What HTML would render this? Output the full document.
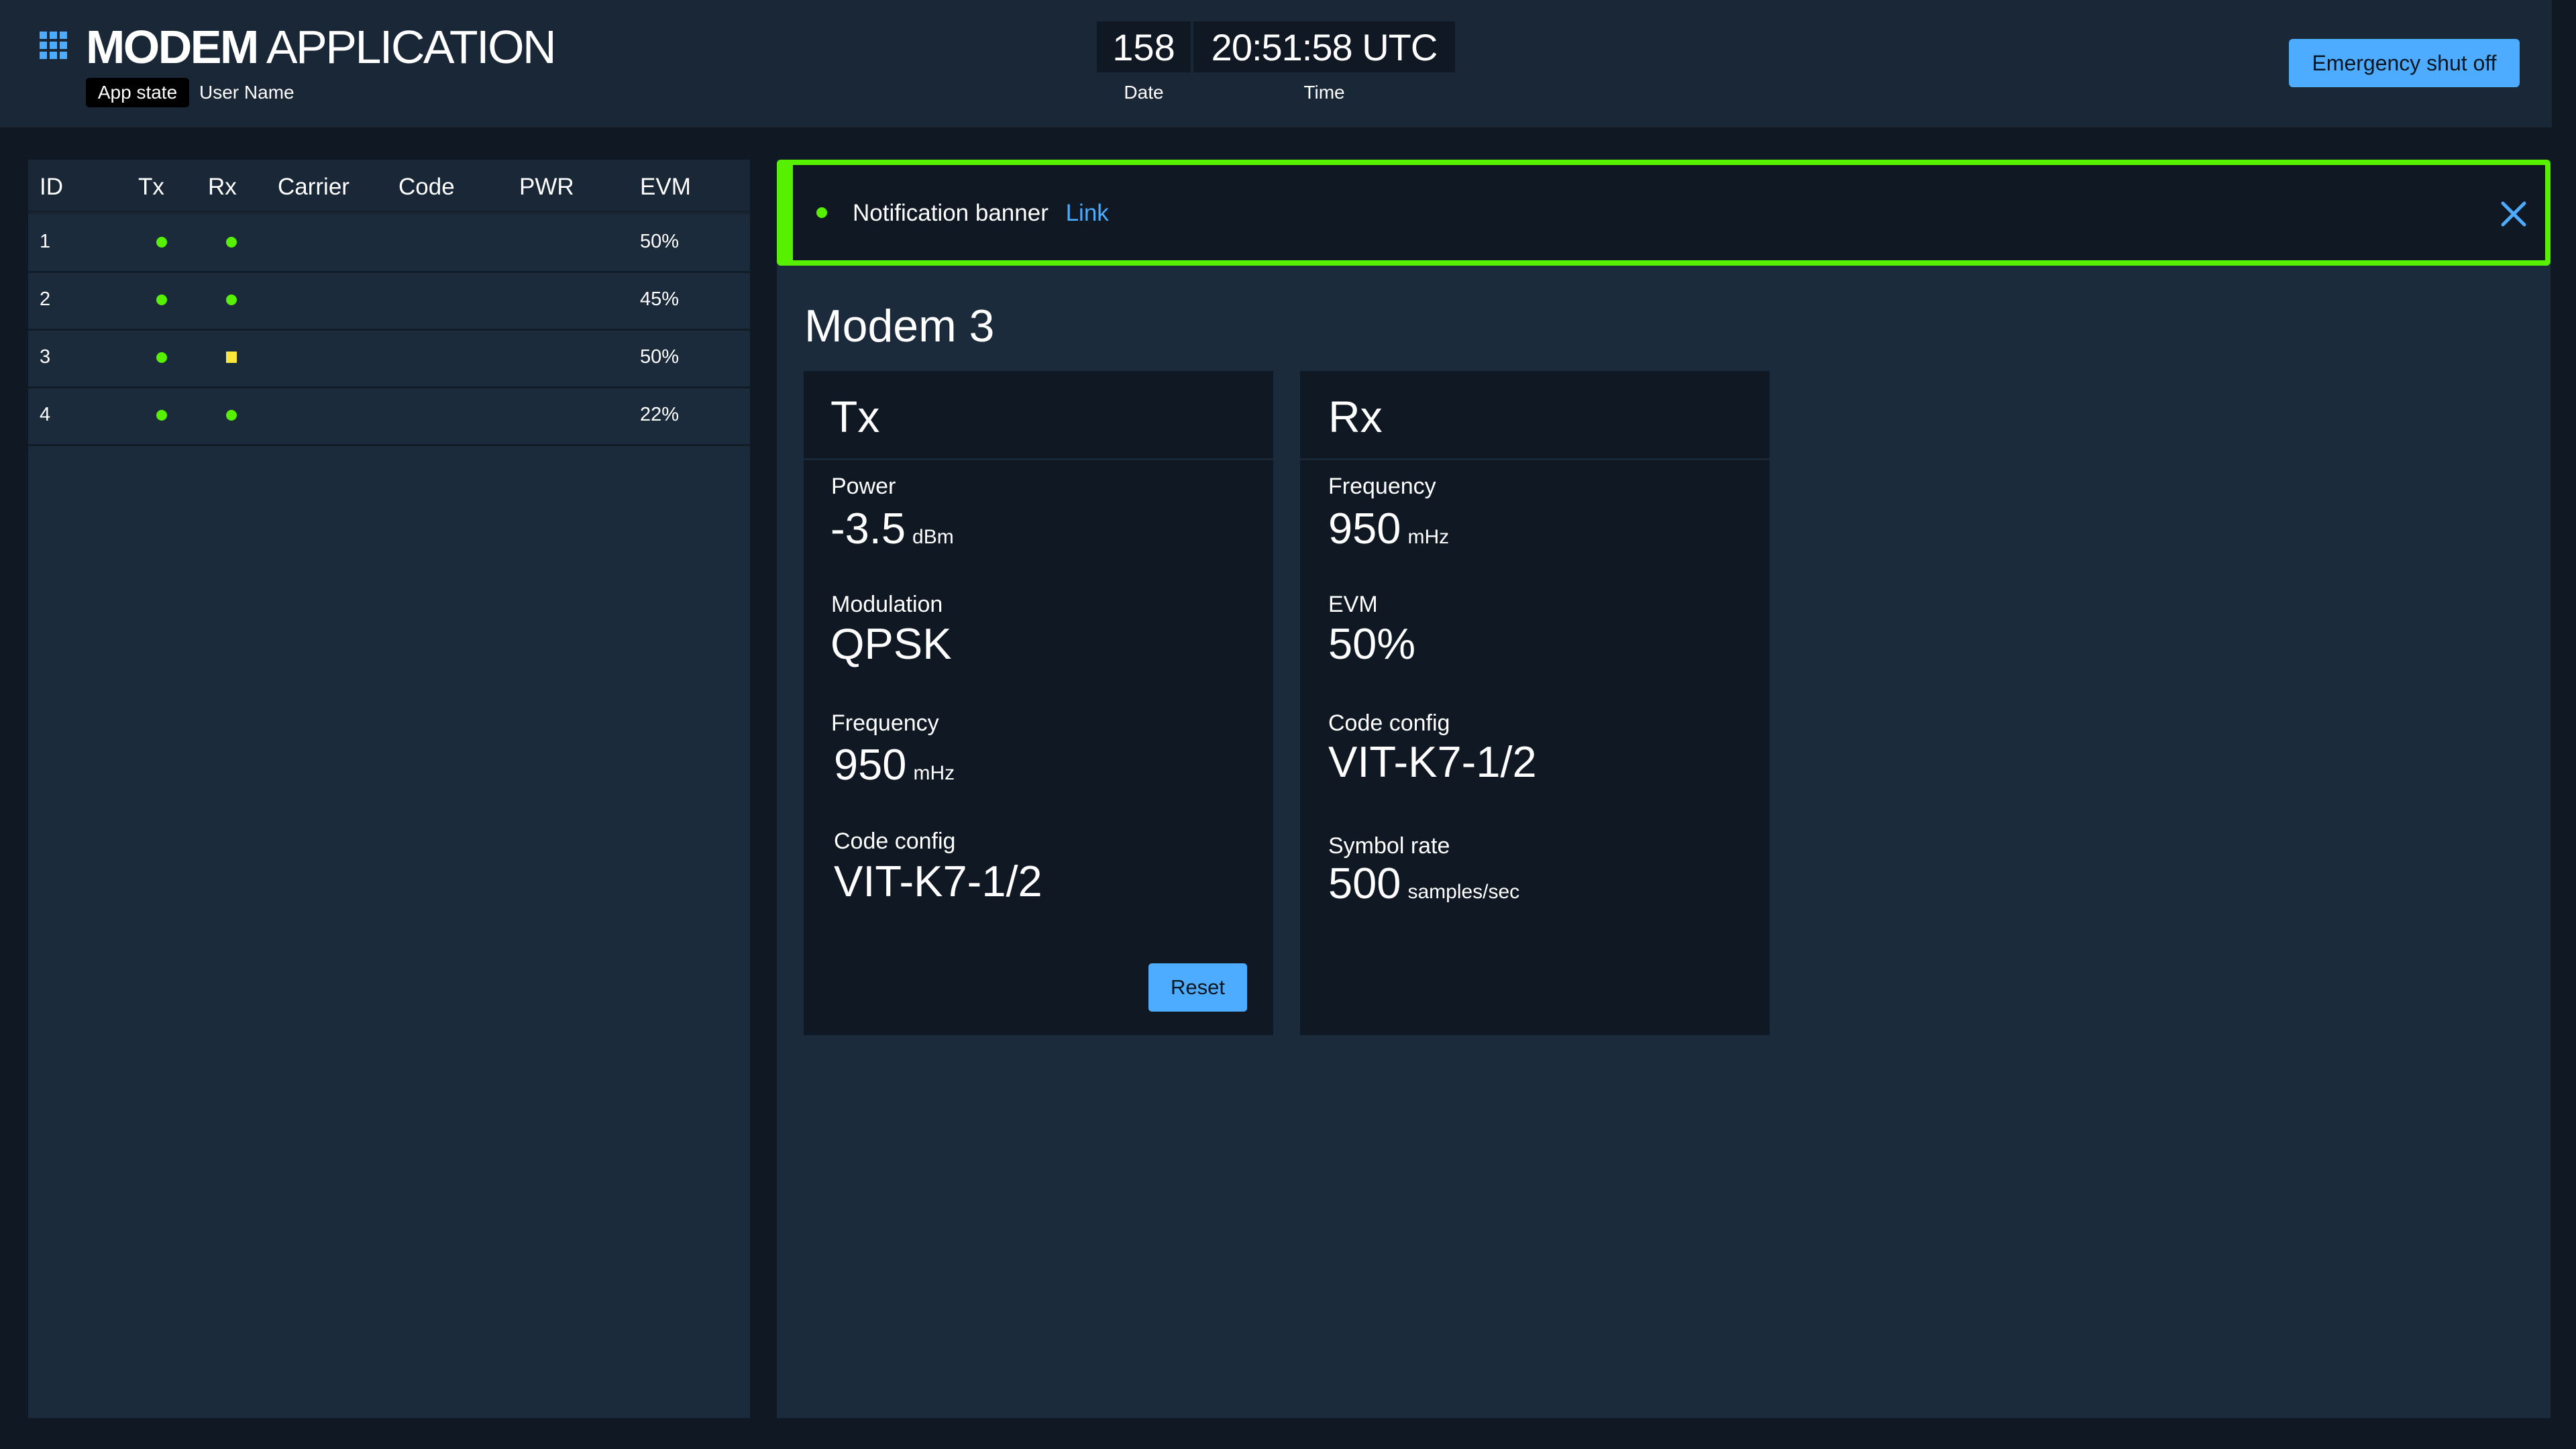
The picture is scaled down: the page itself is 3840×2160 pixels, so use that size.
<!DOCTYPE html>
<html><head><meta charset="utf-8"><style>
*{margin:0;padding:0;box-sizing:border-box}
body{width:3840px;height:2160px;background:#101923;font-family:"Liberation Sans",sans-serif;color:#fff;position:relative;overflow:hidden}
.a{position:absolute}
.hdr{left:0;top:0;width:3804px;height:190px;background:#1a2737}
.t{white-space:nowrap}
.lbl{font-size:34px}
.val{font-size:65px}
.unit{font-size:30px;margin-left:10px}
.dot{width:16px;height:16px;border-radius:50%;background:#56f000}
</style></head><body>
<div class="a hdr"></div>
<svg class="a" style="left:59px;top:47px" width="42" height="42" viewBox="0 0 42 42" fill="#4dacff">
<rect x="0" y="0" width="11" height="11"/><rect x="15" y="0" width="11" height="11"/><rect x="30" y="0" width="11" height="11"/>
<rect x="0" y="15" width="11" height="11"/><rect x="15" y="15" width="11" height="11"/><rect x="30" y="15" width="11" height="11"/>
<rect x="0" y="30" width="11" height="11"/><rect x="15" y="30" width="11" height="11"/><rect x="30" y="30" width="11" height="11"/>
</svg>
<div class="a t" style="left:128px;top:28px;font-size:70px;line-height:84px;letter-spacing:-2.5px"><b>MODEM</b> APPLICATION</div>
<div class="a t" style="left:128px;top:116px;width:154px;height:44px;background:#000;border-radius:5px;font-size:28px;line-height:44px;text-align:center">App state</div>
<div class="a t" style="left:297px;top:116px;font-size:28px;line-height:44px">User Name</div>
<div class="a t" style="left:1635px;top:32px;width:140px;height:76px;background:#101923;font-size:56px;line-height:78px;text-align:center">158</div>
<div class="a t" style="left:1779px;top:32px;width:390px;height:76px;background:#101923;font-size:56px;line-height:78px;text-align:center;letter-spacing:-1px">20:51:58 UTC</div>
<div class="a t" style="left:1635px;top:122px;width:140px;font-size:28px;text-align:center">Date</div>
<div class="a t" style="left:1779px;top:122px;width:390px;font-size:28px;text-align:center">Time</div>
<div class="a t" style="left:3412px;top:58px;width:344px;height:72px;background:#4dacff;border-radius:6px;color:#0b1520;font-size:32px;line-height:72px;text-align:center">Emergency shut off</div>

<div class="a" style="left:42px;top:238px;width:1076px;height:1876px;background:#1c2b3c"></div>
<div class="a" style="left:42px;top:238px;width:1076px;height:76px;background:#1a2737"></div>
<div class="a" style="left:42px;top:314px;width:1076px;height:8px;background:linear-gradient(#131d28,#1c2b3c)"></div>
<div class="a t" style="left:59px;top:258px;font-size:35px;line-height:42px">ID</div>
<div class="a t" style="left:206px;top:258px;font-size:35px;line-height:42px">Tx</div>
<div class="a t" style="left:310px;top:258px;font-size:35px;line-height:42px">Rx</div>
<div class="a t" style="left:414px;top:258px;font-size:35px;line-height:42px">Carrier</div>
<div class="a t" style="left:594px;top:258px;font-size:35px;line-height:42px">Code</div>
<div class="a t" style="left:774px;top:258px;font-size:35px;line-height:42px">PWR</div>
<div class="a t" style="left:954px;top:258px;font-size:35px;line-height:42px">EVM</div>

<div class="a" style="left:42px;top:404px;width:1076px;height:3px;background:#121c27"></div>
<div class="a" style="left:42px;top:490px;width:1076px;height:3px;background:#121c27"></div>
<div class="a" style="left:42px;top:576px;width:1076px;height:3px;background:#121c27"></div>
<div class="a" style="left:42px;top:662px;width:1076px;height:3px;background:#121c27"></div>

<div class="a t" style="left:59px;top:344px;font-size:29px">1</div><div class="a dot" style="left:233px;top:353px"></div><div class="a dot" style="left:337px;top:353px"></div><div class="a t" style="left:954px;top:344px;font-size:29px">50%</div>
<div class="a t" style="left:59px;top:430px;font-size:29px">2</div><div class="a dot" style="left:233px;top:439px"></div><div class="a dot" style="left:337px;top:439px"></div><div class="a t" style="left:954px;top:430px;font-size:29px">45%</div>
<div class="a t" style="left:59px;top:516px;font-size:29px">3</div><div class="a dot" style="left:233px;top:525px"></div><div class="a" style="left:337px;top:524px;width:16px;height:17px;background:#fce83a"></div><div class="a t" style="left:954px;top:516px;font-size:29px">50%</div>
<div class="a t" style="left:59px;top:602px;font-size:29px">4</div><div class="a dot" style="left:233px;top:611px"></div><div class="a dot" style="left:337px;top:611px"></div><div class="a t" style="left:954px;top:602px;font-size:29px">22%</div>

<div class="a" style="left:1158px;top:238px;width:2644px;height:1876px;background:#1c2b3c"></div>
<div class="a" style="left:1158px;top:238px;width:2644px;height:158px;background:#101923;border:8px solid #56f000;border-left-width:24px;border-radius:6px"></div>
<div class="a dot" style="left:1217px;top:309px"></div>
<div class="a t" style="left:1271px;top:297px;font-size:35px;line-height:42px">Notification banner <span style="color:#4dacff;margin-left:16px">Link</span></div>
<svg class="a" style="left:3728px;top:300px" width="38" height="38" viewBox="0 0 38 38"><path d="M3 3L35 35M35 3L3 35" stroke="#4dacff" stroke-width="5" stroke-linecap="round"/></svg>

<div class="a t" style="left:1199px;top:446px;font-size:68px;line-height:80px">Modem 3</div>

<div class="a" style="left:1198px;top:553px;width:700px;height:990px;background:#101923"></div>
<div class="a" style="left:1198px;top:683px;width:700px;height:3px;background:#1a2737"></div>
<div class="a t" style="left:1238px;top:582px;font-size:66px;line-height:78px">Tx</div>
<div class="a t lbl" style="left:1239px;top:706px">Power</div>
<div class="a t" style="left:1238px;top:750px"><span class="val">-3.5</span><span class="unit">dBm</span></div>
<div class="a t lbl" style="left:1239px;top:882px">Modulation</div>
<div class="a t val" style="left:1238px;top:922px">QPSK</div>
<div class="a t lbl" style="left:1239px;top:1059px">Frequency</div>
<div class="a t" style="left:1243px;top:1102px"><span class="val">950</span><span class="unit">mHz</span></div>
<div class="a t lbl" style="left:1243px;top:1235px">Code config</div>
<div class="a t val" style="left:1243px;top:1276px">VIT-K7-1/2</div>
<div class="a t" style="left:1712px;top:1436px;width:147px;height:72px;background:#4dacff;border-radius:5px;color:#0b1520;font-size:31px;line-height:72px;text-align:center">Reset</div>

<div class="a" style="left:1938px;top:553px;width:700px;height:990px;background:#101923"></div>
<div class="a" style="left:1938px;top:683px;width:700px;height:3px;background:#1a2737"></div>
<div class="a t" style="left:1980px;top:582px;font-size:66px;line-height:78px">Rx</div>
<div class="a t lbl" style="left:1980px;top:706px">Frequency</div>
<div class="a t" style="left:1980px;top:750px"><span class="val">950</span><span class="unit">mHz</span></div>
<div class="a t lbl" style="left:1980px;top:882px">EVM</div>
<div class="a t val" style="left:1980px;top:922px">50%</div>
<div class="a t lbl" style="left:1980px;top:1059px">Code config</div>
<div class="a t val" style="left:1980px;top:1098px">VIT-K7-1/2</div>
<div class="a t lbl" style="left:1980px;top:1242px">Symbol rate</div>
<div class="a t" style="left:1980px;top:1279px"><span class="val">500</span><span class="unit">samples/sec</span></div>
</body></html>
